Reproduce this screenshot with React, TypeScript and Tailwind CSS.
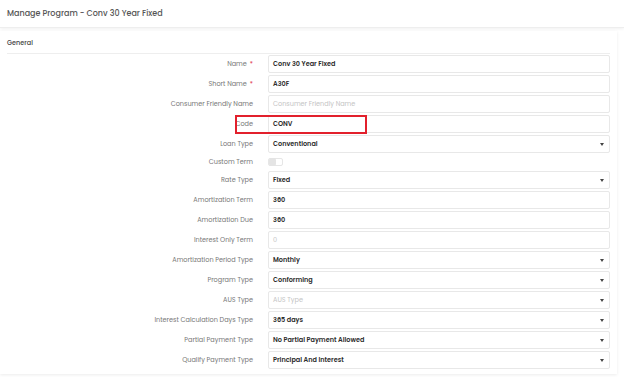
import React from 'react'

type Row = {
  label: string
  value?: string
  placeholder?: string
  required?: boolean
  select?: boolean
  toggle?: boolean
  highlight?: boolean
}

const rows: Row[] = [
  { label: 'Name', value: 'Conv 30 Year Fixed', required: true },
  { label: 'Short Name', value: 'A30F', required: true },
  { label: 'Consumer Friendly Name', placeholder: 'Consumer Friendly Name' },
  { label: 'Code', value: 'CONV', highlight: true },
  { label: 'Loan Type', value: 'Conventional', select: true },
  { label: 'Custom Term', toggle: true },
  { label: 'Rate Type', value: 'Fixed', select: true },
  { label: 'Amortization Term', value: '360' },
  { label: 'Amortization Due', value: '360' },
  { label: 'Interest Only Term', placeholder: '0' },
  { label: 'Amortization Period Type', value: 'Monthly', select: true },
  { label: 'Program Type', value: 'Conforming', select: true },
  { label: 'AUS Type', placeholder: 'AUS Type', select: true },
  { label: 'Interest Calculation Days Type', value: '365 days', select: true },
  { label: 'Partial Payment Type', value: 'No Partial Payment Allowed', select: true },
  { label: 'Qualify Payment Type', value: 'Principal And Interest', select: true },
]

function Caret() {
  return (
    <span className="ml-auto mr-[5px] h-0 w-0 border-x-[2px] border-t-[3px] border-x-transparent border-t-[#444]" />
  )
}

function FormRow({ row }: { row: Row }) {
  if (row.toggle) {
    return (
      <div className="flex h-[14px] items-center">
        <div className="w-[254px] pr-[1px] text-right text-[6.5px] text-[#777]">{row.label}</div>
        <div className="ml-[14px] flex h-[8px] w-[15px] items-center rounded-[2px] border border-[#e6e6e6] bg-white">
          <span className="h-[8px] w-[7px] rounded-[2px] bg-[#e4e4e4]" />
        </div>
      </div>
    )
  }
  return (
    <div className="relative flex h-[18px] items-center">
      <div className="w-[254px] pr-[1px] text-right text-[6.5px] text-[#777]">
        {row.label}
        {row.required && <span className="ml-[3px] text-[#e0334a]">*</span>}
      </div>
      <div className="ml-[14px] flex h-[18px] w-[342px] items-center rounded-[2px] border border-[#e8e8e8] bg-white pl-[4px]">
        {row.value ? (
          <span className="text-[6.5px] font-semibold text-[#2b2b2b]">{row.value}</span>
        ) : (
          <span className="text-[6.5px] text-[#c4c4c4]">{row.placeholder}</span>
        )}
        {row.select && <Caret />}
      </div>
      {row.highlight && (
        <div className="absolute left-[235px] top-0 h-[19px] w-[132px] border-2 border-[#e2202c]" />
      )}
    </div>
  )
}

export default function App() {
  return (
    <div className="h-[377px] w-[624px] overflow-hidden bg-white font-['Poppins','Inter',sans-serif]">
      {/* header */}
      <div className="flex h-[28px] items-center border-b border-[#eeeeee] bg-white px-[7px] shadow-[0_1px_3px_rgba(0,0,0,0.06)]">
        <h1 className="text-[8px] font-medium text-[#555]">Manage Program - Conv 30 Year Fixed</h1>
      </div>

      {/* card */}
      <div className="mr-[7px] mt-[3px] bg-white shadow-[0_1px_3px_rgba(0,0,0,0.08)]">
        <div className="mx-[7px] flex h-[23px] items-center border-b border-[#eeeeee] pt-[2px]">
          <span className="text-[6.5px] font-medium text-[#444]">General</span>
        </div>
        <div className="flex flex-col gap-[2px] pb-[5px] pt-[1px]">
          {rows.map((r) => (
            <FormRow key={r.label} row={r} />
          ))}
        </div>
      </div>
    </div>
  )
}
